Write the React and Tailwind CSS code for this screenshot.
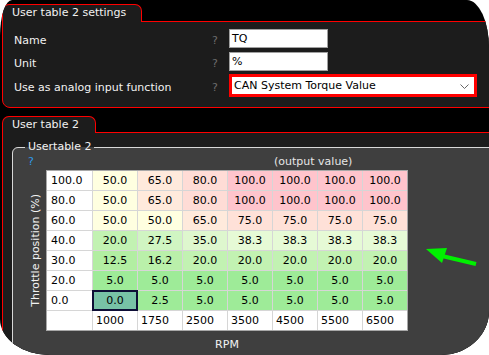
const rows = [
  ["100.0", ["50.0", "65.0", "80.0", "100.0", "100.0", "100.0", "100.0"]],
  ["80.0", ["50.0", "65.0", "80.0", "100.0", "100.0", "100.0", "100.0"]],
  ["60.0", ["50.0", "50.0", "65.0", "75.0", "75.0", "75.0", "75.0"]],
  ["40.0", ["20.0", "27.5", "35.0", "38.3", "38.3", "38.3", "38.3"]],
  ["30.0", ["12.5", "16.2", "20.0", "20.0", "20.0", "20.0", "20.0"]],
  ["20.0", ["5.0", "5.0", "5.0", "5.0", "5.0", "5.0", "5.0"]],
  ["0.0", ["0.0", "2.5", "5.0", "5.0", "5.0", "5.0", "5.0"]],
];

const rpm = ["1000", "1750", "2500", "3500", "4500", "5500", "6500"];

// value -> cell colour, same scale as the tuner
const cellColor = {
  "100.0": "bg-[#ffc4cc]",
  "80.0": "bg-[#ffdcd6]",
  "75.0": "bg-[#ffe1d8]",
  "65.0": "bg-[#ffeadc]",
  "50.0": "bg-[#ffffe0]",
  "38.3": "bg-[#e6fad6]",
  "35.0": "bg-[#def7ce]",
  "27.5": "bg-[#d0f5c2]",
  "20.0": "bg-[#c2f2b2]",
  "16.2": "bg-[#baf0aa]",
  "12.5": "bg-[#b2eea2]",
  "5.0": "bg-[#9eeb98]",
  "2.5": "bg-[#9eeb98]",
  "0.0": "bg-[#78c2a6]",
};

const SettingRow = ({ label, className, children }) => (
  <div className={`flex items-center ${className}`}>
    <span className="w-[198px] pt-[5px] text-[#f2f2f2]">{label}</span>
    <span className="w-[17px] pt-[5px] text-[#6c6c6c]">?</span>
    {children}
  </div>
);

export default function App() {
  return (
    <div className="w-[489px] h-[355px] bg-white font-['DejaVu_Sans',sans-serif] text-[11px]">
      <div className="relative w-full h-full bg-black overflow-hidden rounded-tl-[12px_36px] rounded-tr-[22px_48px] rounded-br-[48px_44px] rounded-bl-[50px_36px]">
        {/* Settings section */}
        <div className="pt-[4px] pl-[2px]">
          <div className="relative z-10 -mb-px w-[140px] h-[18px] border border-b-0 border-[#ff0000] rounded-t-[7px] bg-[#1c1c1c] pl-[9px] leading-[16px] text-[#f2f2f2]">
            User table 2 settings
          </div>
          <div className="w-[540px] h-[87px] border border-[#ff0000] rounded-bl-[8px] bg-[#1c1c1c] pl-[11px] pt-[7px]">
            <SettingRow label="Name" className="h-[19px]">
              <div className="w-[99px] h-[19px] border border-[#a0a0a0] bg-white pl-[2px] leading-[17px] text-black">TQ</div>
            </SettingRow>
            <SettingRow label="Unit" className="h-[19px] mt-[4px]">
              <div className="w-[99px] h-[19px] border border-[#a0a0a0] bg-white pl-[2px] leading-[17px] text-black">%</div>
            </SettingRow>
            <SettingRow label="Use as analog input function" className="h-[23px] mt-[3px]">
              <div className="w-[248px] h-[23px] border-[3px] border-[#ff0000] bg-white flex items-center justify-between pl-[2px] pr-[5px] pt-[2px] text-black">
                <span>CAN System Torque Value</span>
                <svg width="9" height="5" viewBox="0 0 9 5">
                  <polyline points="0.5,0.5 4.5,4.5 8.5,0.5" fill="none" stroke="#666" strokeWidth="1" />
                </svg>
              </div>
            </SettingRow>
          </div>
        </div>

        {/* Table section */}
        <div className="pt-[8px] pl-[2px]">
          <div className="relative z-10 -mb-px w-[94px] h-[17px] border border-b-0 border-[#ff0000] rounded-t-[7px] bg-[#1c1c1c] pl-[9px] leading-[15px] text-[#f2f2f2]">
            User table 2
          </div>
          <div className="w-[540px] h-[260px] border border-[#ff0000] bg-[#1c1c1c] pl-[9px] pt-[7px]">
            <fieldset className="w-[600px] h-[260px] border border-[#d8d8d8] rounded-tl-[6px] bg-[#3f3f3f]">
              <legend className="ml-[12px] px-[3px] leading-[14px] text-[#f2f2f2]">Usertable 2</legend>
              <div className="flex h-[16px] items-center pl-[15px]">
                <span className="w-[246px] text-[#2f9ae8]">?</span>
                <span className="text-[#e6e6e6]">(output value)</span>
              </div>
              <div className="flex">
                <div className="w-[33px] flex items-center justify-end pr-[4px]">
                  <span className="[writing-mode:vertical-rl] rotate-180 leading-[13px] text-[#f2f2f2] whitespace-nowrap">
                    Throttle position (%)
                  </span>
                </div>
                <div className="grid grid-cols-[45px_repeat(7,44px)] gap-px bg-[#d6d6d6] border border-[#a8a8a8] text-black leading-[19px]">
                  {rows.map(([y, vals]) => (
                    <div key={y} className="contents">
                      <div className="h-[19px] bg-white pl-[4px]">{y}</div>
                      {vals.map((v, i) => (
                        <div
                          key={i}
                          className={`h-[19px] text-center ${cellColor[v]} ${
                            y === "0.0" && i === 0 ? "relative z-10 outline-2 outline-[#0e0e36] -outline-offset-1" : ""
                          }`}
                        >
                          {v}
                        </div>
                      ))}
                    </div>
                  ))}
                  <div className="h-[19px] bg-white"></div>
                  {rpm.map((r) => (
                    <div key={r} className="h-[19px] bg-white pl-[3px]">{r}</div>
                  ))}
                </div>
              </div>
              <div className="ml-[33px] w-[362px] mt-[7px] text-center leading-[13px] text-[#f2f2f2]">RPM</div>
            </fieldset>
          </div>
        </div>

        {/* Annotation arrow */}
        <svg className="absolute left-[424px] top-[245px]" width="56" height="24" viewBox="0 0 56 24">
          <polygon points="2,4 23,3 18,18" fill="#00f000" />
          <line x1="18" y1="11" x2="52" y2="19" stroke="#00f000" strokeWidth="4" />
        </svg>
      </div>
    </div>
  );
}
